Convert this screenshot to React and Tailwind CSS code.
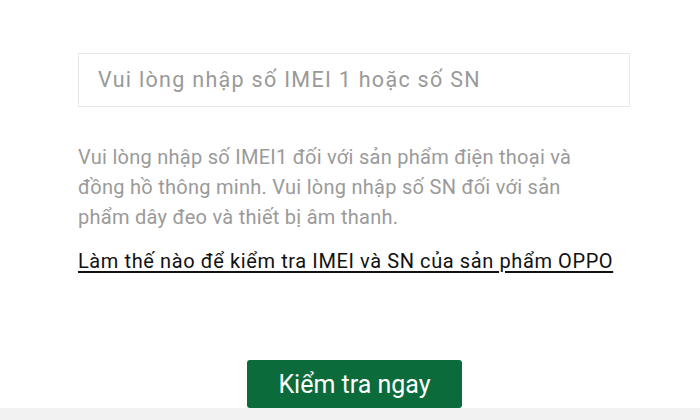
export default function App() {
  return (
    <div className="w-[700px] h-[420px] bg-white flex flex-col overflow-hidden" style={{ fontFamily: "Roboto, 'Noto Sans', sans-serif" }}>
      <div className="flex-1 flex flex-col px-[78px] pt-[53px]">
        <div className="w-[552px] h-[54px] border border-[#e8e8e8] flex items-center pl-[19px]">
          <span className="text-[21.5px] tracking-[1.3px] text-[#999999] leading-none">Vui lòng nhập số IMEI 1 hoặc số SN</span>
        </div>
        <p className="mt-[35px] text-[20px] tracking-[0.27px] leading-[30px] text-[#9a9a9a] whitespace-nowrap">
          Vui lòng nhập số IMEI1 đối với sản phẩm điện thoại và<br />
          đồng hồ thông minh. Vui lòng nhập số SN đối với sản<br />
          phẩm dây đeo và thiết bị âm thanh.
        </p>
        <a className="mt-[16px] self-start text-[20px] tracking-[0.6px] leading-[26px] text-[#111] underline underline-offset-[3px] whitespace-nowrap">Làm thế nào để kiểm tra IMEI và SN của sản phẩm OPPO</a>
        <div className="flex justify-center mt-auto">
          <button className="w-[215px] h-[48px] bg-[#0b6b3a] rounded-[3px] text-white text-[25px] leading-none ml-[9px]">Kiểm tra ngay</button>
        </div>
      </div>
      <div className="h-[12px] bg-[#f2f2f2]"></div>
    </div>
  );
}
